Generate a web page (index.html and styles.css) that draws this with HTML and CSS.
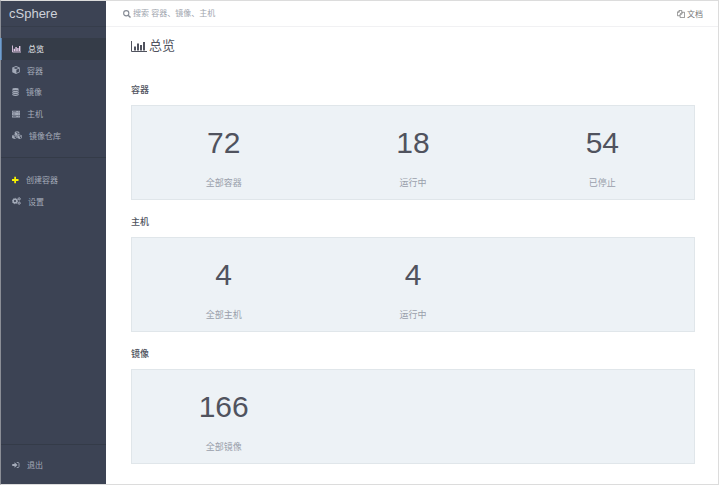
FILE: index.html
```html
<!DOCTYPE html>
<html lang="zh-CN">
<head>
<meta charset="utf-8">
<meta name="viewport" content="width=device-width, initial-scale=1">
<title>cSphere</title>
<link rel="stylesheet" href="styles.css">
</head>
<body>
<div class="app">
  <aside class="sidebar">
    <a class="brand" href="#">cSphere</a>
    <nav class="nav">
      <ul class="menu menu-main">
        <li><a class="active" href="#">
          <svg class="icon w9" viewBox="0 0 18 16"><path d="M1 1v13h17" fill="none" stroke="currentColor" stroke-width="1.800"/><path d="M3.200 7.500h2.800v5H3.200zM6.800 4h2.800v8.500H6.800zM10.400 6h2.800v6.500h-2.800zM14 2h2.800v10.500H14z"/></svg>总览</a></li>
        <li><a href="#">
          <svg class="icon w8" viewBox="0 0 16 16"><path fill-rule="evenodd" d="M8 0l7.500 3v9.500L8 16 .5 12.500V3zM8 1.800L2.800 3.900 8 6l5.200-2.100zM8.800 7.500v6.300l5-2.400V5.500z"/></svg>容器</a></li>
        <li><a href="#">
          <svg class="icon w7" viewBox="0 0 14 16"><ellipse cx="7" cy="2.300" rx="6.500" ry="2.300"/><path d="M.5 4.300q6.500 3 13 0v2.200q-6.500 3.600-13 0zM.5 8.200q6.500 3 13 0v2.200q-6.500 3.600-13 0zM.5 12.100q6.500 3 13 0v1.700q-6.500 4-13 0z"/></svg>镜像</a></li>
        <li><a href="#">
          <svg class="icon w8" viewBox="0 0 16 16"><path fill-rule="evenodd" d="M0 1.500h16v3.800H0zM0 6.200h16V10H0zM0 11h16v3.800H0zM1.500 3v.9h7V3zM1.500 7.700v.9h5v-.9zM1.500 12.500v.9h7v-.9zM13 2.800v1.200h1.400V2.800zM13 7.500v1.200h1.400V7.500zM13 12.300v1.200h1.400v-1.200z"/></svg>主机</a></li>
        <li><a href="#">
          <svg class="icon w10" viewBox="0 0 20 16"><path fill-rule="evenodd" d="M10 0l4.500 1.900v5L10 9 5.500 6.900v-5zM10 1.200L7.200 2.300 10 3.500l2.800-1.200zM10.600 4.700v2.800l2.700-1.300V3.500zM4.800 7.200l4.600 1.900v4.800L4.800 16 .2 13.900V9.100zM4.800 8.400L2 9.600l2.800 1.200 2.800-1.200zM5.400 11.900v2.700l2.800-1.300v-2.600zM15.200 7.200l4.600 1.900v4.800L15.200 16l-4.600-2.100V9.100zM15.200 8.400l-2.800 1.200 2.800 1.200L18 9.600zM15.800 11.900v2.700l2.800-1.300v-2.600z"/></svg>镜像仓库</a></li>
      </ul>
      <ul class="menu menu-tools">
        <li><a href="#">
          <svg class="icon w7 plus" viewBox="0 0 14 16"><path d="M4.500 1.500H8v4.700h5v3.600H8v4.700H4.500V9.800H0V6.200h4.500z"/></svg>创建容器</a></li>
        <li><a href="#">
          <svg class="icon w9" viewBox="0 0 18 16"><g fill="none" stroke="currentColor"><circle cx="6" cy="8" r="3.700" stroke-width="3"/><circle cx="6" cy="8" r="5.300" stroke-width="1.800" stroke-dasharray="2.080 2.080"/><circle cx="14.300" cy="3.700" r="2" stroke-width="1.900"/><circle cx="14.300" cy="3.700" r="3.100" stroke-width="1" stroke-dasharray="1.620 1.620"/><circle cx="14.300" cy="12.300" r="2" stroke-width="1.900"/><circle cx="14.300" cy="12.300" r="3.100" stroke-width="1" stroke-dasharray="1.620 1.620"/></g></svg>设置</a></li>
      </ul>
    </nav>
    <div class="logout">
      <a href="#">
        <svg class="icon w8" viewBox="0 0 16 16"><path d="M5 2.500L11 8l-6 5.500v-3.300H.5V5.800H5z"/><path d="M9.500 3H12q2 0 2 2v6q0 2-2 2H9.500" fill="none" stroke="currentColor" stroke-width="1.700"/></svg>退出</a>
    </div>
  </aside>
  <div class="page">
    <header class="topbar">
      <label class="search">
        <svg class="icon w8" viewBox="0 0 16 16"><g fill="none" stroke="currentColor" stroke-width="2.200"><circle cx="6.500" cy="6.500" r="5.200"/><path d="M10.300 10.300l4.700 4.700" stroke-width="2.800"/></g></svg>
        <input type="search" aria-label="搜索" placeholder="搜索 容器、镜像、主机">
      </label>
      <a class="docs" href="#">
        <svg class="icon w8" viewBox="0 0 16 16"><g fill="none" stroke="currentColor" stroke-width="1.500"><path d="M6 11.500H.8V4.500L4.500.8h5v3.500M4.500.8v3.700H.8"/><path d="M10 4.500h5.200v10.700H6.300V8.300zM10 4.500v3.800H6.300"/></g></svg>文档</a>
    </header>
    <main class="content">
      <h1>
        <svg class="icon title-icon" viewBox="0 0 32 26"><path d="M1 2v21h31" fill="none" stroke="currentColor" stroke-width="2"/><path d="M6 13h4v8H6zM12 7h4v14h-4zM18 10h4v11h-4zM24 4h4v17h-4z"/></svg>总览</h1>
      <section>
        <h2>容器</h2>
        <div class="card">
          <div class="stat"><strong>72</strong><span>全部容器</span></div>
          <div class="stat"><strong>18</strong><span>运行中</span></div>
          <div class="stat"><strong>54</strong><span>已停止</span></div>
        </div>
      </section>
      <section>
        <h2>主机</h2>
        <div class="card">
          <div class="stat"><strong>4</strong><span>全部主机</span></div>
          <div class="stat"><strong>4</strong><span>运行中</span></div>
        </div>
      </section>
      <section>
        <h2>镜像</h2>
        <div class="card">
          <div class="stat"><strong>166</strong><span>全部镜像</span></div>
        </div>
      </section>
    </main>
  </div>
</div>
</body>
</html>
```
FILE: styles.css
```css
* {
  box-sizing: border-box;
}

body {
  margin: 0;
  font-family: "Liberation Sans", "Noto Sans CJK SC", sans-serif;
  font-size: 8px;
  color: #50535e;
  background: #fff;
}

a {
  color: inherit;
  text-decoration: none;
}

.app {
  display: flex;
  min-height: 100vh;
  border: 1px solid #dcdcdc;
  border-left-color: #8b8e96;
}

.icon {
  flex: none;
  height: 8px;
  fill: currentColor;
}

.w7 { width: 7px; }
.w8 { width: 8px; }
.w9 { width: 9px; }
.w10 { width: 10px; }

.sidebar {
  display: flex;
  flex-direction: column;
  flex: none;
  width: 105px;
  color: #a4abb9;
  background: #3c4354;
}

.brand {
  height: 26px;
  padding-left: 8px;
  font-size: 13px;
  line-height: 25px;
  color: #ced2da;
  border-bottom: 1px solid #363d4b;
}

.nav {
  flex: 1;
}

.menu {
  display: grid;
  grid-auto-rows: 1fr;
  margin: 0;
  padding: 0;
  list-style: none;
}

.menu-main {
  height: 108px;
  margin: 11px 0;
}

.menu-tools {
  height: 66px;
  padding: 11px 0;
  border-top: 1px solid #343b48;
}

.menu a,
.logout a {
  display: flex;
  align-items: center;
  gap: 7px;
  height: 100%;
  padding-left: 11px;
}

.menu .active {
  color: #f0f1f4;
  background: #353c48;
  box-shadow: -1px 0 #6f9fd0, inset 1px 0 #5b80a8;
}

.menu .active .icon {
  color: #e3c9e6;
}

.menu .plus {
  color: #f6f000;
}

.logout {
  height: 40px;
  border-top: 1px solid #343b48;
}

.page {
  flex: 1;
  min-width: 0;
}

.topbar {
  display: flex;
  align-items: center;
  justify-content: space-between;
  height: 26px;
  padding: 0 15px 0 17px;
  border-bottom: 1px solid #f1f1f3;
}

.search,
.docs {
  display: flex;
  align-items: center;
  gap: 2px;
  color: #858a94;
}

.docs {
  color: #777;
}

.search input {
  width: 160px;
  padding: 0;
  font: inherit;
  color: inherit;
  background: none;
  border: 0;
  outline: 0;
}

.search input::placeholder {
  color: #a0a5ae;
  opacity: 1;
}

.content {
  padding: 9px 23px 16px 25px;
}

h1 {
  display: flex;
  align-items: center;
  gap: 2px;
  margin: 0 0 23px;
  font-size: 13px;
  font-weight: 400;
  line-height: 20px;
}

.title-icon {
  width: 16px;
  height: 13px;
}

h2 {
  margin: 0;
  padding: 5px 0 9px;
  font-size: 9px;
  font-weight: 500;
  line-height: 12px;
}

section + section {
  margin-top: 11px;
}

.card {
  display: grid;
  grid-template-columns: repeat(3, 1fr);
  column-gap: 6px;
  height: 95px;
  padding-top: 20px;
  background: #edf2f6;
  border: 1px solid #e0e6ea;
}

.stat {
  display: flex;
  flex-direction: column;
  align-items: center;
  gap: 16px;
}

.stat strong {
  font-size: 30px;
  font-weight: 400;
  line-height: 34px;
}

.stat span {
  font-size: 9px;
  line-height: 14px;
  color: #999fab;
}
```
